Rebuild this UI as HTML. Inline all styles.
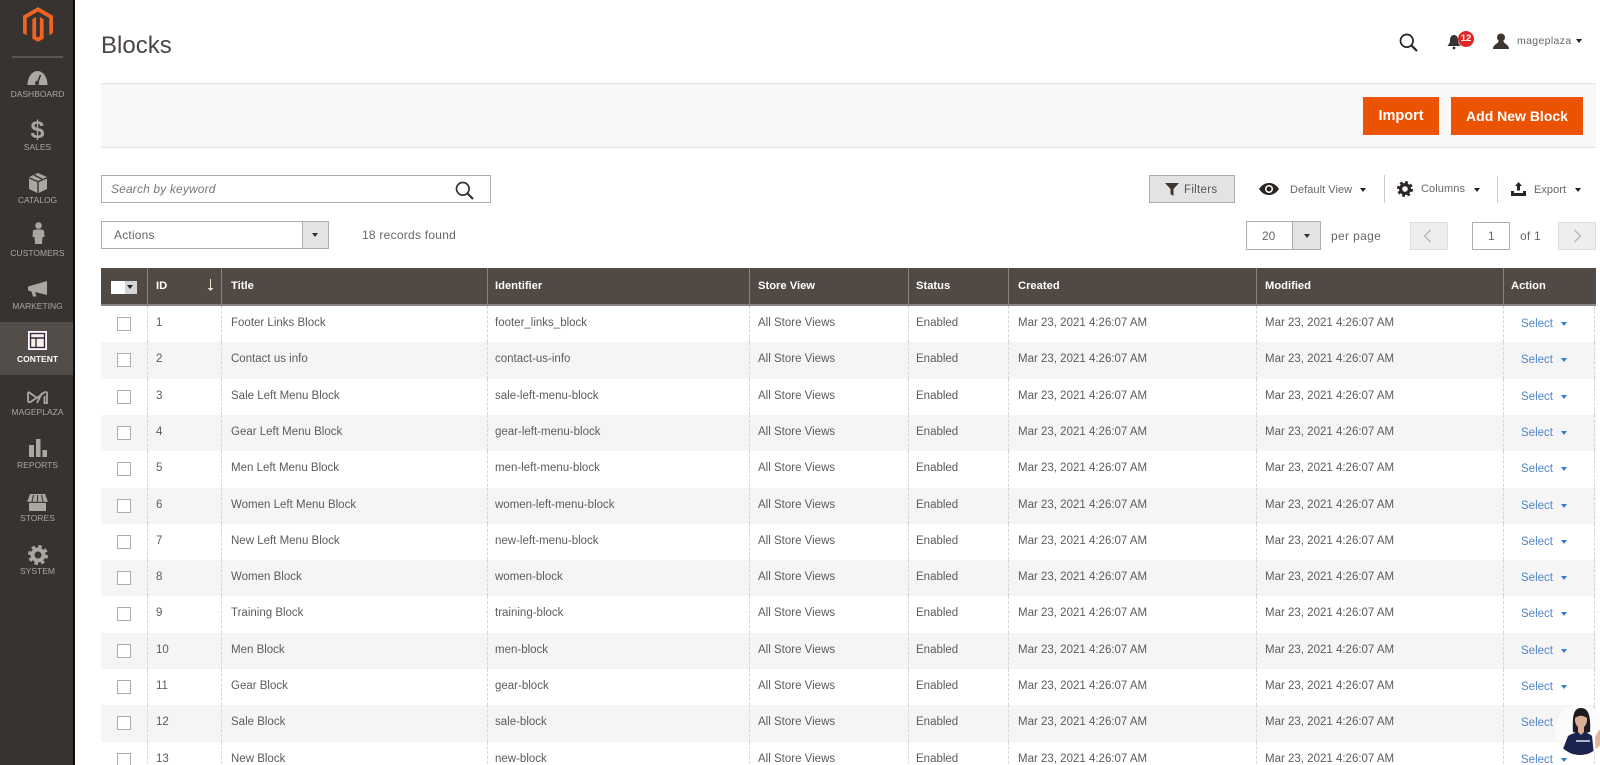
<!DOCTYPE html>
<html lang="en"><head><meta charset="utf-8"><title>Blocks</title>
<style>
html,body{margin:0;padding:0;background:#fff;width:1600px;height:765px;overflow:hidden}
body{font-family:"Liberation Sans",sans-serif;color:#555;position:relative}
.a{position:absolute;white-space:nowrap}
#side{position:absolute;left:0;top:0;width:73px;height:765px;background:#373330;border-right:2px solid #0c0c0c}
.lb{position:absolute;left:0;width:75px;text-align:center;font-size:8.5px;color:#aaa6a0;line-height:12px}
.ic{position:absolute}
.car{position:absolute;width:0;height:0;border-left:3.5px solid transparent;border-right:3.5px solid transparent;border-top:4.5px solid #303030}
.t{font-size:11.5px;color:#555}
.box{position:absolute;box-sizing:border-box;border:1px solid #adadad;background:#fff}
.r{position:absolute;left:101px;width:1495px;height:36.3px;display:flex;box-sizing:border-box}
.r:nth-child(even){background:#f5f5f5}
.r>div{box-sizing:border-box;padding-left:9px;line-height:34px;font-size:11.5px;color:#5c5c5c;white-space:nowrap;border-left:1px dashed #d6d6d6}
.r>div:nth-child(1){width:46px;border-left:0;position:relative;padding:0}
.r>div:nth-child(2){width:74px;padding-left:8px}
.r>div:nth-child(3){width:266px}
.r>div:nth-child(4){width:262px;padding-left:7px}
.r>div:nth-child(5){width:159px;padding-left:8px}
.r>div:nth-child(6){width:100px;padding-left:7px}
.r>div:nth-child(7){width:248px}
.r>div:nth-child(8){width:247px;padding-left:8px}
.r>div:nth-child(9){width:92px;border-right:1px dashed #d6d6d6;padding-left:17px;line-height:37px;color:#4f86c9}
.r i{position:absolute;left:16px;top:11px;width:14px;height:14px;box-sizing:border-box;border:1px solid #adadad;background:#fff}
.r b{display:inline-block;width:0;height:0;margin-left:8px;vertical-align:1px;border-left:3.5px solid transparent;border-right:3.5px solid transparent;border-top:4.5px solid #2b7fd0}
#th{position:absolute;left:101px;top:268px;width:1495px;height:38px;background:#514943;border-bottom:2px solid #8a837f;box-sizing:border-box;display:flex}
#th>div{box-sizing:border-box;padding-left:9px;line-height:36px;font-size:11.2px;font-weight:bold;color:#fff;border-left:1px solid #8a837f;white-space:nowrap;height:36px}
</style></head><body>

<div id="side">
<svg class="ic" style="left:23px;top:7px" width="30" height="35" viewBox="0 0 32 37"><path fill="#f26322" d="M16 0L32 9.2V27.7L28 30V11.5L16 4.6 4 11.5V30L0 27.7V9.2Z"/><path fill="#f26322" d="M16 37L10 33.5V12.8L14 10.5V31L16 32.2 18 31V10.5L22 12.8V33.5Z"/></svg>
<div class="a" style="left:12px;top:56px;width:51px;height:2px;background:#5a5652"></div>

<svg class="ic" style="left:27px;top:70px" width="21" height="16" viewBox="0 0 21 16"><path fill="#aaa6a0" d="M.5 15C.5 7 5 1 10.5 1S20.5 7 20.5 15Z"/><path stroke="#373330" stroke-width="1.6" d="M10 14L13.5 5"/><circle cx="10" cy="13" r="2" fill="#373330"/></svg>
<div class="lb" style="top:88px">DASHBOARD</div>

<div class="a" style="left:0;width:75px;text-align:center;top:117px;font-size:25px;line-height:26px;font-weight:bold;color:#aaa6a0">$</div>
<div class="lb" style="top:141px">SALES</div>

<svg class="ic" style="left:29px;top:173px" width="18" height="20" viewBox="0 0 18 20"><path fill="#aaa6a0" d="M9 0L18 4 9 8 0 4Z"/><path fill="#aaa6a0" d="M0 5.5L8.3 9.2V20L0 16ZM18 5.5L9.7 9.2V20L18 16Z"/><path stroke="#373330" stroke-width="1.5" d="M5 2L13 6"/></svg>
<div class="lb" style="top:194px">CATALOG</div>

<svg class="ic" style="left:32px;top:222px" width="13" height="22" viewBox="0 0 13 22"><circle cx="6.5" cy="3.5" r="3.3" fill="#aaa6a0"/><path fill="#aaa6a0" d="M1 8.5C2.500 7 10.500 7 12 8.500L12.500 15H10.500L10 22H3L2.500 15H.5Z"/></svg>
<div class="lb" style="top:247px">CUSTOMERS</div>

<svg class="ic" style="left:28px;top:281px" width="20" height="16" viewBox="0 0 20 16"><path fill="#aaa6a0" d="M19 0V14L7 11 8.500 15.500H5L3.500 10.500 0 9.500V5.500Z"/></svg>
<div class="lb" style="top:300px">MARKETING</div>

<div class="a" style="left:0;top:322px;width:73px;height:53px;background:#524d49"></div>
<svg class="ic" style="left:28px;top:331px" width="19" height="19" viewBox="0 0 19 19"><rect x="0" y="0" width="19" height="19" fill="#fff"/><rect x="2.500" y="2.500" width="14" height="14" fill="#f6f1ea" stroke="#3c2640" stroke-width="1.400"/><path stroke="#3c2640" stroke-width="1.400" fill="none" d="M2.500 7H16.500M8 7V16.500"/></svg>
<div class="lb" style="top:353px;color:#fff;font-weight:bold;font-size:8.500px">CONTENT</div>

<svg class="ic" style="left:27px;top:391px" width="21" height="13" viewBox="0 0 21 13"><path fill="none" stroke="#aaa6a0" stroke-width="1.800" d="M1 2.500C1 1 2 1 3 2L10 7 17 1.500C19 .5 20 1 20 2.500V12H17.500V5M1 2.500V9C1 12 3 11.500 5 10L10 6.500M10 12L15 2"/></svg>
<div class="lb" style="top:406px">MAGEPLAZA</div>

<svg class="ic" style="left:29px;top:439px" width="18" height="18" viewBox="0 0 18 18"><path fill="#aaa6a0" d="M0 6H5V18H0ZM7 0H11.500V18H7ZM13.500 11H18V18H13.500Z"/></svg>
<div class="lb" style="top:459px">REPORTS</div>

<svg class="ic" style="left:27px;top:494px" width="21" height="17" viewBox="0 0 21 17"><path fill="#aaa6a0" d="M3 0H18L21 8H0Z"/><path fill="#aaa6a0" d="M2 8H19V17H2Z"/><path stroke="#373330" stroke-width="1.100" d="M6.500 1L5 7.500M10.500 1V7.500M14.500 1L16 7.500M0 8.300H21"/></svg>
<div class="lb" style="top:512px">STORES</div>

<svg class="ic" style="left:28px;top:545px" width="20" height="20" viewBox="0 0 20 20"><circle cx="10" cy="10" r="5.500" fill="none" stroke="#aaa6a0" stroke-width="4"/><circle cx="10" cy="10" r="8.500" fill="none" stroke="#aaa6a0" stroke-width="3" stroke-dasharray="3.500 3.176"/></svg>
<div class="lb" style="top:565px">SYSTEM</div>
</div>

<div class="a" style="left:101px;top:31px;font-size:24px;line-height:30px;color:#4a4542">Blocks</div>

<svg class="ic" style="left:1399px;top:33px" width="19" height="19" viewBox="0 0 19 19"><circle cx="7.800" cy="7.800" r="6.300" fill="none" stroke="#222" stroke-width="1.700"/><path stroke="#222" stroke-width="2.200" d="M12.500 12.500L18 18"/></svg>
<svg class="ic" style="left:1447px;top:35px" width="14" height="15" viewBox="0 0 14 15"><path fill="#333" d="M7 0C10 0 11 2.500 11 5.500 11 8 12.500 9.500 13.500 11H.5C1.500 9.500 3 8 3 5.500 3 2.500 4 0 7 0Z"/><circle cx="7" cy="13" r="1.400" fill="#333"/></svg>
<div class="a" style="left:1458px;top:31px;width:16px;height:16px;border-radius:50%;background:#e22626;color:#fff;font-size:9.500px;font-weight:bold;line-height:16px;text-align:center">12</div>
<svg class="ic" style="left:1493px;top:33px" width="16" height="16" viewBox="0 0 16 16"><circle cx="8" cy="4.500" r="4" fill="#41362f"/><path fill="#41362f" d="M5.500 8H10.500C10.500 11 16 11 16 16H0C0 11 5.500 11 5.500 8Z"/></svg>
<div class="a t" style="left:1517px;top:34px;font-size:10.500px;line-height:14px;letter-spacing:.35px;color:#666">mageplaza</div>
<div class="car" style="left:1576px;top:39px;border-top-color:#222"></div>

<div class="a" style="left:101px;top:83px;width:1495px;height:65px;box-sizing:border-box;background:#f8f8f8;border-top:1px solid #e3e3e3;border-bottom:1px solid #e3e3e3"></div>
<div class="a" style="left:1363px;top:97px;width:76px;height:38px;background:#eb5202;color:#fff;font-weight:bold;font-size:14.500px;line-height:38px;text-align:center">Import</div>
<div class="a" style="left:1451px;top:97px;width:132px;height:38px;background:#eb5202;color:#fff;font-weight:bold;font-size:14px;line-height:38px;text-align:center">Add New Block</div>

<div class="box" style="left:101px;top:175px;width:390px;height:28px"></div>
<div class="a" style="left:111px;top:181px;font-size:12px;line-height:16px;font-style:italic;letter-spacing:.15px;color:#777">Search by keyword</div>
<svg class="ic" style="left:455px;top:181px" width="19" height="19" viewBox="0 0 19 19"><circle cx="7.800" cy="7.800" r="6.300" fill="none" stroke="#333" stroke-width="1.700"/><path stroke="#333" stroke-width="2.200" d="M12.500 12.500L18 18"/></svg>

<div class="box" style="left:101px;top:221px;width:228px;height:28px"></div>
<div class="a" style="left:302px;top:221px;width:27px;height:28px;box-sizing:border-box;background:#e3e3e3;border:1px solid #adadad"></div>
<div class="car" style="left:312px;top:233px"></div>
<div class="a t" style="left:114px;top:227px;font-size:12px;line-height:16px;letter-spacing:.2px;color:#666">Actions</div>
<div class="a t" style="left:362px;top:227px;font-size:12px;line-height:16px;letter-spacing:.25px;color:#666">18 records found</div>

<div class="a" style="left:1149px;top:175px;width:86px;height:28px;box-sizing:border-box;background:#e3e3e3;border:1px solid #adadad"></div>
<svg class="ic" style="left:1165px;top:183px" width="14" height="13" viewBox="0 0 14 13"><path fill="#41362f" d="M0 0H14L8.500 6V13L5.500 11V6Z"/></svg>
<div class="a t" style="left:1184px;top:182px;font-size:11.500px;line-height:16px;letter-spacing:.3px;color:#555">Filters</div>

<svg class="ic" style="left:1259px;top:183px" width="20" height="12" viewBox="0 0 20 12"><path fill="#2b2522" d="M0 6C3 1.500 6.500 0 10 0S17 1.500 20 6C17 10.500 13.500 12 10 12S3 10.500 0 6Z"/><circle cx="10" cy="6" r="4" fill="#fff"/><circle cx="10" cy="6" r="2.500" fill="#2b2522"/></svg>
<div class="a t" style="left:1290px;top:182px;font-size:11px;line-height:16px;letter-spacing:.05px;color:#666">Default View</div>
<div class="car" style="left:1360px;top:188px;border-top-color:#222"></div>
<div class="a" style="left:1384px;top:175px;width:1px;height:28px;background:#ccc"></div>
<svg class="ic" style="left:1397px;top:181px" width="16" height="16" viewBox="0 0 20 20"><circle cx="10" cy="10" r="5.500" fill="none" stroke="#2b2522" stroke-width="4"/><circle cx="10" cy="10" r="8.500" fill="none" stroke="#2b2522" stroke-width="3" stroke-dasharray="3.500 3.176"/></svg>
<div class="a t" style="left:1421px;top:181px;font-size:11px;line-height:16px;letter-spacing:.1px;color:#666">Columns</div>
<div class="car" style="left:1474px;top:188px;border-top-color:#222"></div>
<div class="a" style="left:1497px;top:176px;width:1px;height:27px;background:#ccc"></div>
<svg class="ic" style="left:1511px;top:182px" width="15" height="14" viewBox="0 0 15 14"><path fill="#2b2522" d="M7.500 0L11 4H9V8.500H6V4H4ZM0 9H3V11H12V9H15V14H0Z"/></svg>
<div class="a t" style="left:1534px;top:182px;font-size:11px;line-height:16px;letter-spacing:.05px;color:#666">Export</div>
<div class="car" style="left:1575px;top:188px;border-top-color:#222"></div>

<div class="box" style="left:1246px;top:221px;width:75px;height:29px"></div>
<div class="a" style="left:1292px;top:221px;width:29px;height:29px;box-sizing:border-box;background:#e3e3e3;border:1px solid #adadad"></div>
<div class="car" style="left:1304px;top:234px"></div>
<div class="a t" style="left:1262px;top:228px;font-size:12px;line-height:16px;color:#666">20</div>
<div class="a t" style="left:1331px;top:228px;font-size:12px;line-height:16px;letter-spacing:.35px;color:#666">per page</div>
<div class="a" style="left:1410px;top:222px;width:38px;height:28px;box-sizing:border-box;background:#eee;border:1px solid #ddd"></div>
<svg class="ic" style="left:1423px;top:229px" width="9" height="14" viewBox="0 0 9 14"><path fill="none" stroke="#b5b5b5" stroke-width="1.300" d="M7.500 1L1.500 7 7.500 13"/></svg>
<div class="box" style="left:1472px;top:222px;width:38px;height:28px"></div>
<div class="a t" style="left:1488px;top:228px;font-size:12px;line-height:16px;color:#666">1</div>
<div class="a t" style="left:1520px;top:228px;font-size:12px;line-height:16px;letter-spacing:.2px;color:#666">of 1</div>
<div class="a" style="left:1558px;top:222px;width:38px;height:28px;box-sizing:border-box;background:#eee;border:1px solid #ddd"></div>
<svg class="ic" style="left:1573px;top:229px" width="9" height="14" viewBox="0 0 9 14"><path fill="none" stroke="#b5b5b5" stroke-width="1.300" d="M1.500 1L7.500 7 1.500 13"/></svg>

<div id="th">
<div style="width:46px;border-left:0;position:relative"><span class="a" style="left:10px;top:13px;width:14px;height:13px;background:#fff"></span><span class="a" style="left:24px;top:13px;width:12px;height:13px;background:#d5d5d5"></span><span class="car" style="left:26px;top:17px;border-top-color:#222"></span></div>
<div style="width:74px;position:relative;padding-left:8px">ID<svg class="ic" style="left:59px;top:11px" width="7" height="12" viewBox="0 0 7 12"><path fill="#e8e0c8" d="M3 0H4V9H6.500L3.500 12 .5 9H3Z"/></svg></div>
<div style="width:266px">Title</div>
<div style="width:262px;padding-left:7px">Identifier</div>
<div style="width:159px;padding-left:8px">Store View</div>
<div style="width:100px;padding-left:7px">Status</div>
<div style="width:248px">Created</div>
<div style="width:247px;padding-left:8px">Modified</div>
<div style="width:92px;padding-left:7px">Action</div>
</div>

<div id="rows">
<div class="r" style="top:306px"><div><i></i></div><div>1</div><div>Footer Links Block</div><div>footer_links_block</div><div>All Store Views</div><div>Enabled</div><div>Mar 23, 2021 4:26:07 AM</div><div>Mar 23, 2021 4:26:07 AM</div><div>Select<b></b></div></div>
<div class="r" style="top:342.3px"><div><i></i></div><div>2</div><div>Contact us info</div><div>contact-us-info</div><div>All Store Views</div><div>Enabled</div><div>Mar 23, 2021 4:26:07 AM</div><div>Mar 23, 2021 4:26:07 AM</div><div>Select<b></b></div></div>
<div class="r" style="top:378.6px"><div><i></i></div><div>3</div><div>Sale Left Menu Block</div><div>sale-left-menu-block</div><div>All Store Views</div><div>Enabled</div><div>Mar 23, 2021 4:26:07 AM</div><div>Mar 23, 2021 4:26:07 AM</div><div>Select<b></b></div></div>
<div class="r" style="top:414.9px"><div><i></i></div><div>4</div><div>Gear Left Menu Block</div><div>gear-left-menu-block</div><div>All Store Views</div><div>Enabled</div><div>Mar 23, 2021 4:26:07 AM</div><div>Mar 23, 2021 4:26:07 AM</div><div>Select<b></b></div></div>
<div class="r" style="top:451.2px"><div><i></i></div><div>5</div><div>Men Left Menu Block</div><div>men-left-menu-block</div><div>All Store Views</div><div>Enabled</div><div>Mar 23, 2021 4:26:07 AM</div><div>Mar 23, 2021 4:26:07 AM</div><div>Select<b></b></div></div>
<div class="r" style="top:487.5px"><div><i></i></div><div>6</div><div>Women Left Menu Block</div><div>women-left-menu-block</div><div>All Store Views</div><div>Enabled</div><div>Mar 23, 2021 4:26:07 AM</div><div>Mar 23, 2021 4:26:07 AM</div><div>Select<b></b></div></div>
<div class="r" style="top:523.8px"><div><i></i></div><div>7</div><div>New Left Menu Block</div><div>new-left-menu-block</div><div>All Store Views</div><div>Enabled</div><div>Mar 23, 2021 4:26:07 AM</div><div>Mar 23, 2021 4:26:07 AM</div><div>Select<b></b></div></div>
<div class="r" style="top:560.1px"><div><i></i></div><div>8</div><div>Women Block</div><div>women-block</div><div>All Store Views</div><div>Enabled</div><div>Mar 23, 2021 4:26:07 AM</div><div>Mar 23, 2021 4:26:07 AM</div><div>Select<b></b></div></div>
<div class="r" style="top:596.4px"><div><i></i></div><div>9</div><div>Training Block</div><div>training-block</div><div>All Store Views</div><div>Enabled</div><div>Mar 23, 2021 4:26:07 AM</div><div>Mar 23, 2021 4:26:07 AM</div><div>Select<b></b></div></div>
<div class="r" style="top:632.7px"><div><i></i></div><div>10</div><div>Men Block</div><div>men-block</div><div>All Store Views</div><div>Enabled</div><div>Mar 23, 2021 4:26:07 AM</div><div>Mar 23, 2021 4:26:07 AM</div><div>Select<b></b></div></div>
<div class="r" style="top:669px"><div><i></i></div><div>11</div><div>Gear Block</div><div>gear-block</div><div>All Store Views</div><div>Enabled</div><div>Mar 23, 2021 4:26:07 AM</div><div>Mar 23, 2021 4:26:07 AM</div><div>Select<b></b></div></div>
<div class="r" style="top:705.3px"><div><i></i></div><div>12</div><div>Sale Block</div><div>sale-block</div><div>All Store Views</div><div>Enabled</div><div>Mar 23, 2021 4:26:07 AM</div><div>Mar 23, 2021 4:26:07 AM</div><div>Select<b></b></div></div>
<div class="r" style="top:741.6px"><div><i></i></div><div>13</div><div>New Block</div><div>new-block</div><div>All Store Views</div><div>Enabled</div><div>Mar 23, 2021 4:26:07 AM</div><div>Mar 23, 2021 4:26:07 AM</div><div>Select<b></b></div></div>
</div>

<svg class="ic" style="left:1555px;top:705px" width="50" height="50" viewBox="0 0 50 50"><defs><clipPath id="cp"><circle cx="25" cy="25" r="25"/></clipPath></defs><g clip-path="url(#cp)"><rect width="50" height="50" fill="#fbfbfb"/><path fill="#1d1a22" d="M18 27C17 10 19 3 26 3S36 10 35 27L31 28H21Z"/><ellipse cx="26" cy="15" rx="6" ry="8" fill="#dcae96"/><path fill="#1d1a22" d="M20 13C21 8 23 6 26 6S31 8 32 13C28 10 24 10 20 13Z"/><path fill="#dcae96" d="M23 21H29V31H23Z"/><path fill="#1b2450" d="M8 44L13 31C16 29 20 28 23 27L26 30 29 27C32 28 35 29 37 31L39 50H10Z"/><path fill="#e0b5a0" d="M40 32L44 25 47 27 50 30V50H41Z"/><path stroke="#dfe3ee" stroke-width="1.600" d="M21 36H35"/></g></svg>

</body></html>
